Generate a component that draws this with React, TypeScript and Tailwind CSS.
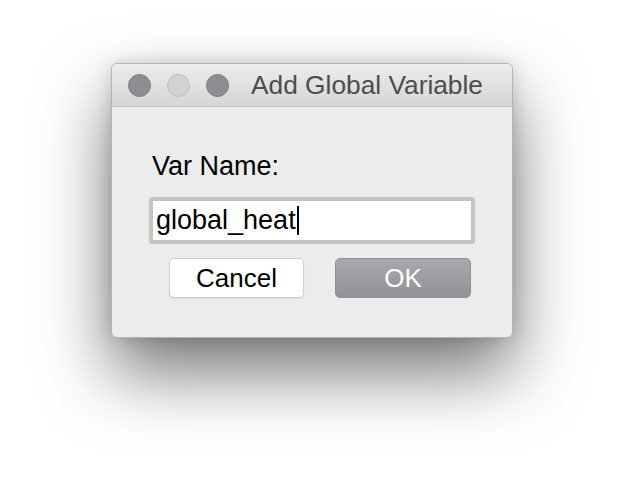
export default function App() {
  return (
    <div
      className="flex h-[498px] w-[624px] justify-center bg-white pt-[63px]"
      style={{ fontFamily: '"Liberation Sans", Arial, sans-serif' }}
    >
      {/* 다이얼로그 창 */}
      <div className="flex h-[275px] w-[402px] flex-col overflow-hidden rounded-[6px] border border-[#b4b4b4] bg-[#ececec] shadow-[0_34px_70px_rgba(0,0,0,0.55),0_0_16px_rgba(0,0,0,0.15)]">
        {/* 타이틀 바 */}
        <div className="flex h-[43px] items-center border-b border-[#c2c2c2] bg-gradient-to-b from-[#ececec] to-[#d6d6d6] pl-[16px]">
          <div className="flex gap-[16px]">
            <span className="h-[23px] w-[23px] rounded-full border border-[#7e7d82] bg-[#8e8d92]" />
            <span className="h-[23px] w-[23px] rounded-full border border-[#bdbdbd] bg-[#d2d2d2]" />
            <span className="h-[23px] w-[23px] rounded-full border border-[#7e7d82] bg-[#8e8d92]" />
          </div>
          <span className="ml-[22px] text-[26.3px] leading-none text-[#4d4d4d]">
            Add Global Variable
          </span>
        </div>

        {/* 본문 */}
        <div className="flex flex-col px-[37px] pt-[46px]">
          <label className="pl-[3px] text-[27px] leading-none text-black">
            Var Name:
          </label>
          <div className="mt-[17px] flex h-[47px] w-[326px] items-center rounded-[3px] border-[4px] border-[#c3c3c3] bg-white pl-[3px]">
            <span className="text-[27px] leading-none text-black">global_heat</span>
            <span className="ml-[1px] h-[29px] w-[2px] bg-black" />
          </div>
          <div className="mt-[14px] flex gap-[31px] pl-[20px]">
            <button className="h-[40px] w-[135px] rounded-[5px] border border-[#cfcfcf] bg-white text-[26px] leading-none text-black shadow-[0_1px_1px_rgba(0,0,0,0.08)]">
              Cancel
            </button>
            <button className="h-[40px] w-[136px] rounded-[5px] border border-[#8f8e93] bg-gradient-to-b from-[#a9a8ad] to-[#939297] text-[26px] leading-none text-white">
              OK
            </button>
          </div>
        </div>
      </div>
    </div>
  );
}
